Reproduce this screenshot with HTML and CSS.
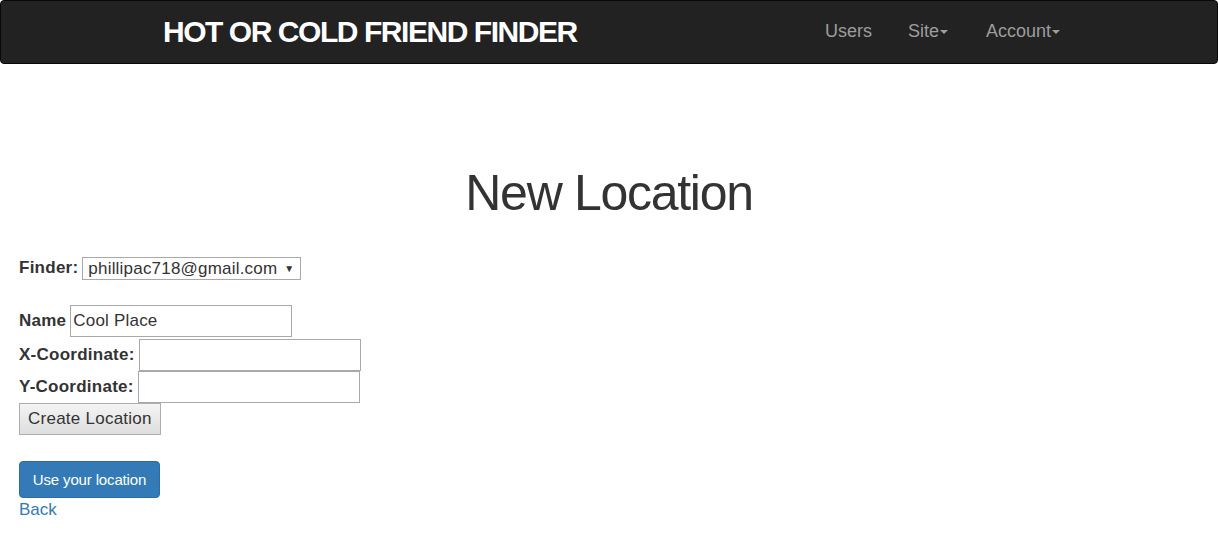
FILE: index.html
```html
<!DOCTYPE html>
<html>
<head>
<meta charset="utf-8">
<link rel="stylesheet" href="styles.css">
</head>
<body>
<nav class="navbar">
  <div class="nav-inner">
    <a class="brand" href="#">HOT OR COLD FRIEND FINDER</a>
    <ul class="nav-links">
      <li><a href="#">Users</a></li>
      <li><a href="#">Site<span class="caret"></span></a></li>
      <li><a href="#">Account<span class="caret"></span></a></li>
    </ul>
  </div>
</nav>
<main class="content">
  <h1 class="title">New Location</h1>
  <div class="finder-row">
    <label class="lbl">Finder:</label>
    <span class="select">phillipac718@gmail.com <span class="sel-arrow">▼</span></span>
  </div>
  <form class="loc-form">
    <div class="field field-first"><label class="lbl">Name</label><input class="txt" type="text" value="Cool Place"></div>
    <div class="field"><label class="lbl">X-Coordinate:</label><input class="txt" type="text"></div>
    <div class="field"><label class="lbl">Y-Coordinate:</label><input class="txt" type="text"></div>
    <div class="field"><button class="btn-default" type="button">Create Location</button></div>
  </form>
  <button class="btn-primary" type="button">Use your location</button>
  <a class="back" href="#">Back</a>
</main>
</body>
</html>
```
FILE: styles.css
```css
html, body { margin: 0; padding: 0; }
body {
  font-family: "Liberation Sans", Arial, sans-serif;
  font-size: 17px;
  color: #333;
  background: #fff;
}
.navbar {
  height: 64px;
  background: #222;
  border: 1px solid #080808;
  border-radius: 4px;
  box-sizing: border-box;
}
.nav-inner {
  display: flex;
  align-items: center;
  height: 100%;
  padding: 0 157px 0 162px;
}
.brand {
  color: #fff;
  font-weight: bold;
  font-size: 30px;
  letter-spacing: -1.45px;
  text-decoration: none;
  flex: 1;
}
.nav-links {
  list-style: none;
  display: flex;
  margin: 0;
  padding: 0;
}
.nav-links li a {
  display: block;
  color: #9d9d9d;
  text-decoration: none;
  font-size: 18px;
  line-height: 20px;
  padding: 0 18px;
  margin-top: -2px;
}
.nav-links li:last-child a { padding-right: 0; padding-left: 20px; }
.caret {
  display: inline-block;
  width: 0; height: 0;
  border-top: 4px solid #9d9d9d;
  border-left: 4px solid transparent;
  border-right: 4px solid transparent;
  vertical-align: middle;
  margin-left: 1px;
}
.content {
  padding: 0 19px;
}
.title {
  text-align: center;
  font-weight: normal;
  font-size: 50px;
  letter-spacing: -1.3px;
  margin: 98px 0 0;
  line-height: 62px;
  color: #333;
}
.lbl { font-weight: bold; margin-right: 4px; letter-spacing: 0.25px; }
.finder-row {
  display: flex;
  align-items: center;
  margin-top: 32px;
  height: 24px;
}
.select {
  display: inline-block;
  border: 1px solid #a9a9a9;
  height: 23px;
  box-sizing: border-box;
  padding: 0 6px 0 5px;
  line-height: 21px;
  font-size: 17px;
  letter-spacing: 0.2px;
}
.sel-arrow { font-size: 10px; vertical-align: 2px; margin-left: 2px; }
.loc-form { margin-top: 25px; }
.field { display: flex; align-items: center; height: 32px; }
.field-first { margin-bottom: 2px; }
.txt {
  width: 222px;
  height: 32px;
  box-sizing: border-box;
  border: 1px solid #a9a9a9;
  font-family: "Liberation Sans", Arial, sans-serif;
  font-size: 17px;
  letter-spacing: 0.2px;
  padding: 0 2px;
  color: #333;
  margin: 0;
}
.btn-default {
  height: 32px;
  padding: 0 8px;
  font-family: "Liberation Sans", Arial, sans-serif;
  font-size: 17px;
  letter-spacing: 0.25px;
  color: #333;
  border: 1px solid #adadad;
  background: linear-gradient(#f4f4f4, #dedede);
  border-radius: 0;
}
.btn-primary {
  display: block;
  margin-top: 26px;
  height: 37px;
  width: 141px;
  background: #337ab7;
  border: 1px solid #2e6da4;
  border-radius: 4px;
  color: #fff;
  font-family: "Liberation Sans", Arial, sans-serif;
  font-size: 15px;
  letter-spacing: -0.15px;
  padding: 0;
}
.back {
  display: block;
  color: #337ab7;
  text-decoration: none;
  font-size: 17px;
  line-height: 24px;
  margin-top: 0;
}
```
